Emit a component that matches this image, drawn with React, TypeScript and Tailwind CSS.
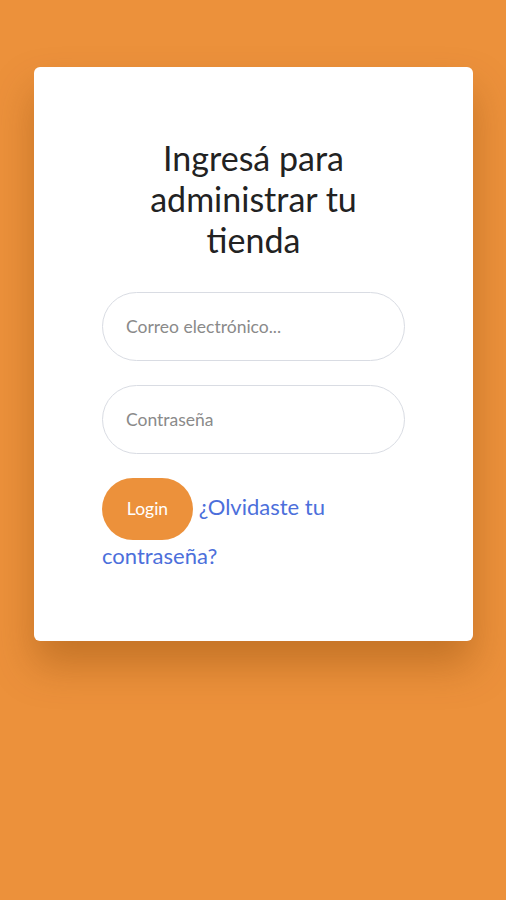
import React from 'react';

export default function App() {
  return (
    <div className="min-h-[900px] w-full bg-[#ec913b] pt-[67px] px-[34px]" style={{ fontFamily: 'Lato, "Noto Sans", sans-serif' }}>
      <div className="h-[574px] w-[439px] rounded-[6px] bg-white px-[68px] pt-[70px] shadow-[0_24px_40px_rgba(120,60,0,0.35)]">
        <h1 className="text-center text-[34px] leading-[41px] text-[#222] px-[30px]">
          Ingresá para administrar tu tienda
        </h1>

        <div className="mt-[32px] flex flex-col gap-[24px]">
          <input
            type="email"
            placeholder="Correo electrónico..."
            className="h-[69px] w-full rounded-full border border-[#d9dce3] px-[23px] text-[17.5px] text-[#333] placeholder:text-[#8a8a8a] outline-none"
          />
          <input
            type="password"
            placeholder="Contraseña"
            className="h-[69px] w-full rounded-full border border-[#d9dce3] px-[23px] text-[17.5px] text-[#333] placeholder:text-[#8a8a8a] outline-none"
          />
        </div>

        <div className="mt-[24px] text-[22px] leading-[32px]">
          <button
            type="button"
            className="inline-block h-[62px] w-[91px] rounded-[31px] bg-[#ec913b] text-[17.5px] text-white align-middle"
          >
            Login
          </button>{' '}
          <a href="#" className="text-[#4c6fdb]">
            ¿Olvidaste tu contraseña?
          </a>
        </div>
      </div>
    </div>
  );
}
